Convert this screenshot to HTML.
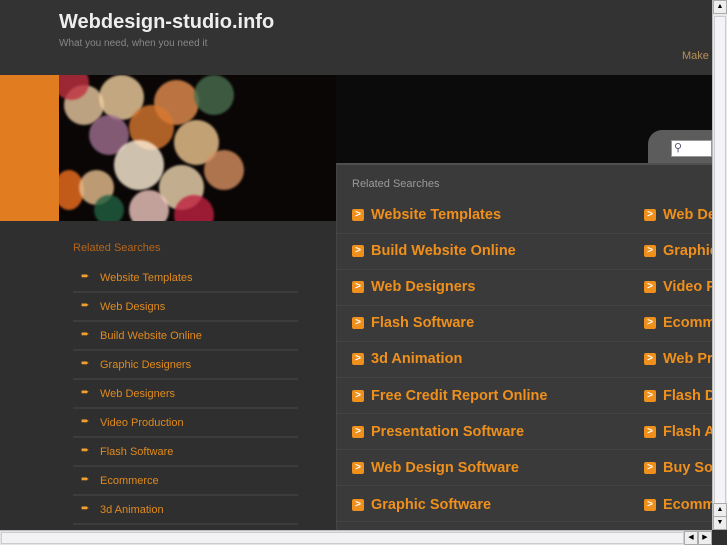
<!DOCTYPE html>
<html><head><meta charset="utf-8"><style>
*{margin:0;padding:0;box-sizing:border-box}
html,body{overflow:hidden}
body{width:727px;height:545px;background:#2f2f2f;font-family:"Liberation Sans",sans-serif;position:relative}
.hdr{position:absolute;left:0;top:0;width:712px;height:75px;background:#333}
.hdr h1{position:absolute;left:59px;top:11px;font-size:20px;color:#eee;font-weight:bold}
.hdr p{position:absolute;left:59px;top:38px;font-size:10px;color:#888}
.make{position:absolute;left:682px;top:50px;font-size:11px;color:#b8905a}
.ban{position:absolute;left:0;top:75px;width:712px;height:146px;background:#0c0b0b}
.or{position:absolute;left:0;top:0;width:59px;height:146px;background:#e27c20}
.ph{position:absolute;left:59px;top:0;width:277px;height:146px;overflow:hidden;background:#0a0606}
.ph i{position:absolute;border-radius:50%;opacity:.8;filter:blur(1px)}
.tab{position:absolute;left:648px;top:130px;width:64px;height:34px;background:#5c5c5c;border-top-left-radius:14px}
.sb{position:absolute;left:671px;top:140px;width:41px;height:17px;background:#fff;border:1px solid #999}
.rp{position:absolute;left:336px;top:163px;width:376px;height:367px;background:#3a3a3a;border-top:2px solid #505050;border-left:1px solid #444;overflow:hidden}
.rp h3{position:absolute;left:15px;top:13px;font-size:11px;font-weight:normal;color:#9a9a9a}
.it{position:absolute;font-size:14.5px;font-weight:bold;color:#f0901c;white-space:nowrap}
.it b{position:absolute;left:-19px;top:2px;width:12px;height:12px;background:#f0901c;border-radius:2px;color:#fff;font-size:10px;line-height:12px;text-align:center}
.sep{position:absolute;left:0;width:376px;border-top:1px dotted #4a4a4a}
.lt{position:absolute;left:73px;top:242px;font-size:11px;color:#b5651d}
.li{position:absolute;left:73px;width:225px;height:29px;border-bottom:2px solid #3c3c3c;font-size:11px;color:#e08a1e}
.li span{position:absolute;left:27px;top:8px}
.li em{position:absolute;left:8px;top:7px;font-style:normal;font-size:10px;color:#f0a030}
.vs{position:absolute;left:712px;top:0;width:15px;height:530px;background:#e8e8ee;border-left:1px solid #bbb}
.hs{position:absolute;left:0;top:530px;width:712px;height:15px;background:#e4e4e8;border-top:1px solid #bbb}
.btn{position:absolute;width:14px;height:14px;background:#eee;border:1px solid #aaa;font-size:7px;text-align:center;line-height:12px;color:#000}
</style></head><body>
<div class="hdr"><h1>Webdesign-studio.info</h1><p>What you need, when you need it</p><div class="make">Make</div></div>
<div class="ban"><div class="or"></div>
<div class="ph">
<i style="left:5px;top:10px;width:40px;height:40px;background:#e9c9a0"></i>
<i style="left:-5px;top:-10px;width:35px;height:35px;background:#c03040"></i>
<i style="left:40px;top:0;width:45px;height:45px;background:#f0d0a0"></i>
<i style="left:95px;top:5px;width:45px;height:45px;background:#e89050"></i>
<i style="left:135px;top:0;width:40px;height:40px;background:#4a7050"></i>
<i style="left:30px;top:40px;width:40px;height:40px;background:#a07090"></i>
<i style="left:70px;top:30px;width:45px;height:45px;background:#d87830"></i>
<i style="left:115px;top:45px;width:45px;height:45px;background:#f0c890"></i>
<i style="left:55px;top:65px;width:50px;height:50px;background:#fff0d8"></i>
<i style="left:145px;top:75px;width:40px;height:40px;background:#d89060"></i>
<i style="left:-5px;top:95px;width:30px;height:40px;background:#f07020"></i>
<i style="left:20px;top:95px;width:35px;height:35px;background:#e8c090"></i>
<i style="left:100px;top:90px;width:45px;height:45px;background:#f0d8b0"></i>
<i style="left:70px;top:115px;width:40px;height:40px;background:#f0c8c0"></i>
<i style="left:115px;top:120px;width:40px;height:40px;background:#c02040"></i>
<i style="left:35px;top:120px;width:30px;height:30px;background:#206040"></i>
</div></div>
<div class="tab"></div><div class="sb"><span style="position:absolute;left:2px;top:0;font-size:11px;color:#557">&#9906;</span></div>
<div class="lt">Related Searches</div>
<div class="li" style="top:264px"><em>➨</em><span>Website Templates</span></div>
<div class="li" style="top:293px"><em>➨</em><span>Web Designs</span></div>
<div class="li" style="top:322px"><em>➨</em><span>Build Website Online</span></div>
<div class="li" style="top:351px"><em>➨</em><span>Graphic Designers</span></div>
<div class="li" style="top:380px"><em>➨</em><span>Web Designers</span></div>
<div class="li" style="top:409px"><em>➨</em><span>Video Production</span></div>
<div class="li" style="top:438px"><em>➨</em><span>Flash Software</span></div>
<div class="li" style="top:467px"><em>➨</em><span>Ecommerce</span></div>
<div class="li" style="top:496px"><em>➨</em><span>3d Animation</span></div>
<div class="rp"><h3>Related Searches</h3>
<div class="sep" style="top:68px"></div><div class="sep" style="top:104px"></div><div class="sep" style="top:140px"></div><div class="sep" style="top:176px"></div><div class="sep" style="top:212px"></div><div class="sep" style="top:248px"></div><div class="sep" style="top:284px"></div><div class="sep" style="top:320px"></div><div class="sep" style="top:356px"></div>
<div class="it" style="left:34px;top:42px"><b>&gt;</b>Website Templates</div>
<div class="it" style="left:34px;top:78px"><b>&gt;</b>Build Website Online</div>
<div class="it" style="left:34px;top:114px"><b>&gt;</b>Web Designers</div>
<div class="it" style="left:34px;top:150px"><b>&gt;</b>Flash Software</div>
<div class="it" style="left:34px;top:186px"><b>&gt;</b>3d Animation</div>
<div class="it" style="left:34px;top:223px"><b>&gt;</b>Free Credit Report Online</div>
<div class="it" style="left:34px;top:259px"><b>&gt;</b>Presentation Software</div>
<div class="it" style="left:34px;top:295px"><b>&gt;</b>Web Design Software</div>
<div class="it" style="left:34px;top:332px"><b>&gt;</b>Graphic Software</div>
<div class="it" style="left:326px;top:42px"><b>&gt;</b>Web Designs</div>
<div class="it" style="left:326px;top:78px"><b>&gt;</b>Graphic Designers</div>
<div class="it" style="left:326px;top:114px"><b>&gt;</b>Video Production</div>
<div class="it" style="left:326px;top:150px"><b>&gt;</b>Ecommerce</div>
<div class="it" style="left:326px;top:186px"><b>&gt;</b>Web Promotion</div>
<div class="it" style="left:326px;top:223px"><b>&gt;</b>Flash Design</div>
<div class="it" style="left:326px;top:259px"><b>&gt;</b>Flash Animation</div>
<div class="it" style="left:326px;top:295px"><b>&gt;</b>Buy Software</div>
<div class="it" style="left:326px;top:332px"><b>&gt;</b>Ecommerce</div>
</div>
<div class="vs"><div class="btn" style="left:0;top:0">▲</div><div style="position:absolute;left:1px;top:16px;width:12px;height:488px;background:#f4f4f8;border:1px solid #ccc"></div><div class="btn" style="left:0;top:503px">▲</div><div class="btn" style="left:0;top:516px">▼</div></div>
<div class="hs"><div style="position:absolute;left:1px;top:1px;width:683px;height:12px;background:#f2f2f4;border:1px solid #ccc"></div><div class="btn" style="left:684px;top:0">◀</div><div class="btn" style="left:698px;top:0">▶</div></div>
</body></html>
